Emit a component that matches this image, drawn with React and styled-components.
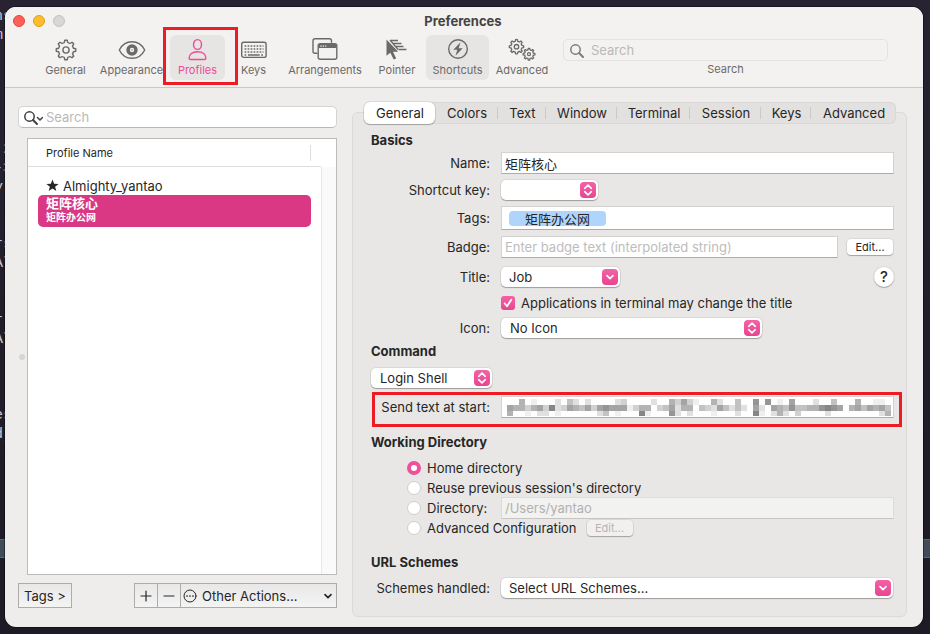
import React from "react";
import styled, { createGlobalStyle, css } from "styled-components";

const font = `Inter, "Noto Sans CJK SC", sans-serif`;

const GlobalStyle = createGlobalStyle`
  *, *::before, *::after { box-sizing: border-box; }
  body { margin: 0; background: #231f2d; font: 13px/16px ${font}; color: #262626; }
  button, input, select { font: inherit; color: inherit; margin: 0; }
`;

const Desktop = styled.div`
  position: relative;
  display: flex;
  min-height: 100vh;
  padding: 7px 7px 7px 5px;
  overflow: hidden;
  background: linear-gradient(#282333, #211e2a 50%, #1e1b27);
`;

const Terminal = styled.div`
  position: absolute;
  inset: 7px 0 0 0;
  color: #c9c5d2;
  font: 15px/19px "Liberation Mono", monospace;
  text-indent: -6px;
  white-space: pre;
`;
const TerminalLine = styled.div`
  height: 19px;
`;
const TerminalBar = styled.div`
  height: 19px;
  margin-top: 95px;
  background: #404b59;
  border-top: 1px solid #59687a;
  border-bottom: 1px solid #59687a;
`;

const Window = styled.main`
  position: relative;
  flex: 1;
  display: flex;
  flex-direction: column;
  border-radius: 11px;
  background: #eeedeb;
  box-shadow: 0 0 0 1px rgba(0, 0, 0, 0.4);
`;

const Header = styled.header`
  height: 81px;
  border-bottom: 1px solid #c9c8c7;
  border-radius: 11px 11px 0 0;
  background: #f3f2f0;
`;
const TitleBar = styled.div`
  display: grid;
  grid-template-columns: 1fr auto 1fr;
  align-items: center;
  height: 28px;
  padding: 0 10px 0 8px;
`;
const Lights = styled.div`
  display: flex;
  gap: 8px;
`;
const Light = styled.button`
  width: 12px;
  height: 12px;
  padding: 0;
  border: 1px solid ${(p) => p.$edge};
  border-radius: 50%;
  background: ${(p) => p.$fill};
`;
const WindowTitle = styled.h1`
  margin: 0;
  font-size: 13px;
  font-weight: 700;
  color: #454443;
`;

const Toolbar = styled.nav`
  display: flex;
  gap: 1px;
  padding: 0 35px 0 33px;
`;
const ToolButton = styled.button`
  position: relative;
  flex: none;
  display: flex;
  flex-direction: column;
  align-items: center;
  width: ${(p) => p.$width}px;
  height: 45px;
  padding: 2px 0 0;
  border: 0;
  border-radius: 6px;
  background: ${(p) => (p.$shaded ? "#e6e5e3" : "transparent")};
  color: ${(p) => (p.$accent ? "#ee4a97" : "#6b6a68")};
  font-size: 11px;
  line-height: 14px;
  svg { display: block; }
`;
const highlight = css`
  content: "";
  position: absolute;
  z-index: 2;
  border: 3px solid #ed1c24;
  pointer-events: none;
`;
const HighlightedTool = styled(ToolButton)`
  &::after { ${highlight} inset: -8px -13px -5px -7px; }
`;
const ToolSearch = styled.label`
  flex: 1;
  display: flex;
  flex-direction: column;
  align-items: center;
  gap: 1px;
  min-width: 0;
  margin: 4px 0 0 8px;
  font-size: 11px;
  line-height: 14px;
  color: #6b6a68;
`;

const SearchBox = styled.div`
  display: flex;
  align-items: center;
  gap: ${(p) => (p.$plain ? 6 : 3)}px;
  width: 100%;
  height: 22px;
  padding: 0 5px 0 ${(p) => (p.$plain ? 6 : 5)}px;
  border: 1px solid ${(p) => (p.$plain ? "#e3e2e0" : "#d4d3d2")};
  border-bottom-color: ${(p) => (p.$plain ? "#e3e2e0" : "#b9b8b7")};
  border-radius: 5px;
  background: ${(p) => (p.$plain ? "transparent" : "#fff")};
  color: ${(p) => (p.$plain ? "#7c7b79" : "#3f3f3f")};
  font-size: 13px;
  svg { flex: none; }
`;
const BareInput = styled.input`
  flex: 1;
  min-width: 0;
  height: 20px;
  padding: 0;
  border: 0;
  outline: 0;
  background: transparent;
  &::placeholder { color: #b9b9b8; opacity: 1; }
`;

const Content = styled.div`
  flex: 1;
  display: grid;
  grid-template-columns: 319fr 555fr;
  gap: 15px;
  padding: 14px 16px 10px 13px;
`;

const Sidebar = styled.section`
  display: flex;
  flex-direction: column;
  padding: 4px 0 9px;
`;
const ListArea = styled.div`
  flex: 1;
  display: flex;
  align-items: stretch;
  margin: 10px 0 8px;
`;
const Handle = styled.div`
  align-self: center;
  flex: none;
  width: 6px;
  height: 6px;
  margin: 0 2px 0 1px;
  border-radius: 50%;
  background: #d6d5d3;
`;
const ListBox = styled.div`
  flex: 1;
  display: grid;
  grid-template: 28px 1fr / 1fr 15px;
  border: 1px solid #bcbbba;
  background: #fff;
`;
const ProfileTable = styled.table`
  grid-row: 1 / 3;
  align-self: start;
  width: 100%;
  border-spacing: 0;
  th {
    height: 28px;
    padding: 0 10px 0 18px;
    border-bottom: 1px solid #dededd;
    text-align: left;
    font-size: 11px;
    font-weight: 400;
  }
  td { padding: 0 10px; }
  tbody::before { content: ""; display: block; height: 9px; }
`;
const ColumnTitle = styled.div`
  border-right: 1px solid #dededd;
`;
const Track = styled.div`
  grid-column: 2;
  grid-row: 2;
  border-left: 1px solid #e7e7e7;
  background: #fafafa;
`;
const ProfileRow = styled.div`
  padding: 0 8px;
  height: ${(p) => (p.$selected ? 32 : 19)}px;
  border-radius: 5px;
  background: ${(p) => (p.$selected ? "#da3884" : "transparent")};
  color: ${(p) => (p.$selected ? "#fff" : "inherit")};
  font-weight: ${(p) => (p.$selected ? 700 : 400)};
  display: ${(p) => (p.$selected ? "block" : "flex")};
  align-items: center;
  gap: 4px;
`;
const ProfileTags = styled.div`
  font-size: 10px;
  line-height: 13px;
`;

const Footer = styled.div`
  display: flex;
  justify-content: space-between;
`;
const SquareButton = styled.button`
  display: flex;
  align-items: center;
  justify-content: center;
  min-width: 24px;
  height: 25px;
  padding: 0 ${(p) => (p.$text ? 5 : 0)}px;
  border: 1px solid #adacab;
  background: linear-gradient(#e9e8e8, #f4f4f3);
  & + &, & + div { margin-left: -1px; }
`;
const Group = styled.div`
  display: flex;
`;
const ActionsMenu = styled.div`
  display: grid;
  grid-template: 23px / 24px 1fr 17px;
  align-items: center;
  width: 157px;
  height: 25px;
  border: 1px solid #adacab;
  background: linear-gradient(#e9e8e8, #f4f4f3);
  svg { grid-row: 1; justify-self: center; pointer-events: none; }
  svg:first-child { grid-column: 1; margin-right: 6px; }
  svg:last-child { grid-column: 3; }
  select {
    grid-area: 1 / 1 / 2 / 4;
    appearance: none;
    height: 23px;
    padding: 0 17px 0 21px;
    border: 0;
    outline: 0;
    background: transparent;
  }
`;

const PanelColumn = styled.section`
  display: flex;
  flex-direction: column;
  isolation: isolate;
`;
const Tabs = styled.div`
  z-index: 1;
  display: grid;
  grid-template-columns: 71fr 63fr 48fr 71fr 73fr 71fr 50fr 85fr;
  height: 22px;
  margin: 0 11px -12px 12px;
  border-radius: 6px;
  background: #e2e1df;
  box-shadow: inset 0 0 0 1px #d9d8d6;
`;
const Tab = styled.button`
  display: flex;
  align-items: center;
  justify-content: center;
  height: 22px;
  padding: 0;
  border: 0;
  border-radius: 6px;
  background: ${(p) => (p.$active ? "#fff" : "transparent")};
  box-shadow: ${(p) => (p.$active ? "0 0 0 1px rgba(0,0,0,.08), 0 1px 1px rgba(0,0,0,.25)" : "none")};
  &::before {
    content: "";
    width: 2px;
    margin-right: auto;
  }
  &::after {
    content: "";
    width: 1px;
    height: 12px;
    margin-left: auto;
    background: ${(p) => (p.$divider ? "#cbcac8" : "transparent")};
  }
`;
const Panel = styled.form`
  flex: 1;
  padding: 15px 12px 17px 18px;
  border: 1px solid #dbdad8;
  border-radius: 6px;
  background: #e8e7e5;
`;
const Heading = styled.h2`
  margin: 0;
  font-size: 13px;
  font-weight: 700;
  line-height: 24px;
`;
const Row = styled.div`
  position: relative;
  display: grid;
  grid-template-columns: 119px minmax(0, 1fr);
  column-gap: 11px;
  align-items: center;
  min-height: 22px;
  margin-bottom: ${(p) => p.$gap ?? 5}px;
  > label:first-child { text-align: right; }
`;
const HighlightedRow = styled(Row)`
  &::after { ${highlight} inset: -4px -8px -9px 1px; }
`;
const Inline = styled.div`
  display: flex;
  align-items: center;
  gap: ${(p) => p.$gap ?? 9}px;
`;
const Spacer = styled.span`
  flex: 1;
`;
const fieldBox = css`
  width: 100%;
  min-width: 0;
  border: 1px solid #d3d2d1;
  border-bottom-color: #adacab;
  background: #fff;
`;
const TextInput = styled.input`
  ${fieldBox}
  height: 22px;
  padding: 0 3px;
  outline: 0;
  font-family: ${(p) => (p.$cjk ? `"Noto Sans CJK SC", sans-serif` : "inherit")};
  &::placeholder { color: #bdbdbc; opacity: 1; }
  &:disabled {
    border-color: #dddcdb #dddcdb #c6c5c4;
    background: #f2f2f1;
    color: #b2b1b0;
  }
`;
const TagField = styled.div`
  ${fieldBox}
  display: flex;
  align-items: center;
  height: 24px;
  padding: 0 7px;
`;
const Token = styled.span`
  padding: 0 16px;
  border-radius: 4px;
  background: #b0d5fd;
  font-family: "Noto Sans CJK SC", sans-serif;
  line-height: 15px;
`;
const Redacted = styled.div`
  display: grid;
  align-items: center;
  > * { grid-area: 1 / 1; }
  svg { width: 100%; height: 17px; padding: 0 3px 0 6px; pointer-events: none; }
`;

const SelectBox = styled.div`
  display: grid;
  align-items: center;
  width: ${(p) => (p.$width ? `${p.$width}px` : "calc(100% - 1px)")};
  height: 20px;
  border-radius: 5px;
  background: #fff;
  box-shadow: 0 0 0 1px rgba(0, 0, 0, 0.06), 0 1px 1px rgba(0, 0, 0, 0.28);
  > * { grid-area: 1 / 1; }
  select {
    appearance: none;
    width: 100%;
    height: 20px;
    padding: 0 24px 0 ${(p) => (p.$single ? 8 : 9)}px;
    border: 0;
    outline: 0;
    background: transparent;
  }
`;
const Knob = styled.span`
  justify-self: end;
  display: flex;
  align-items: center;
  justify-content: center;
  width: 16px;
  height: 16px;
  margin-right: 2px;
  border-radius: 4px;
  background: linear-gradient(#f263a5, #e9458f);
  color: #fff;
  pointer-events: none;
`;
const PushButton = styled.button`
  flex: none;
  width: 46px;
  height: 16px;
  margin-right: 1px;
  padding: 0;
  border: 0;
  border-radius: 4px;
  background: #fff;
  box-shadow: 0 0 0 1px rgba(0, 0, 0, 0.06), 0 1px 1px rgba(0, 0, 0, 0.25);
  font-size: 11px;
  line-height: 16px;
  &:disabled { margin-left: 4px; background: #f1f0ef; color: #b5b4b3; }
`;
const HelpButton = styled.button`
  width: 20px;
  height: 20px;
  padding: 0;
  border: 0;
  border-radius: 50%;
  background: #fff;
  box-shadow: 0 0 0 1px rgba(0, 0, 0, 0.06), 0 1px 1px rgba(0, 0, 0, 0.25);
  font-size: 15px;
  font-weight: 500;
  line-height: 20px;
`;
const Check = styled.span`
  display: grid;
  width: 14px;
  height: 14px;
  > * { grid-area: 1 / 1; }
  input {
    appearance: none;
    width: 14px;
    height: 14px;
    border-radius: 3px;
    background: linear-gradient(#f263a5, #e9458f);
  }
  svg { pointer-events: none; }
`;
const Radio = styled.input`
  appearance: none;
  flex: none;
  width: 14px;
  height: 14px;
  border: 1px solid #cfcecd;
  border-radius: 50%;
  background: #fff;
  &:checked { border: 4px solid #ee5099; }
`;
const RadioRow = styled.div`
  display: flex;
  align-items: center;
  gap: 6px;
  height: 20px;
  padding-left: 36px;
`;
const DirectoryLabel = styled.label`
  flex: none;
  width: 68px;
`;
const Section = styled.div`
  padding-top: ${(p) => p.$top}px;
`;

function gearPath(cx, cy, outer, inner, teeth) {
  const step = (Math.PI * 2) / teeth;
  const at = (r, a) => `${(cx + r * Math.sin(a)).toFixed(2)} ${(cy - r * Math.cos(a)).toFixed(2)}`;
  let d = "";
  for (let i = 0; i < teeth; i++) {
    const a = i * step;
    d += `${i ? "L" : "M"}${at(inner, a - step * 0.3)}L${at(outer, a - step * 0.16)}`;
    d += `A${outer} ${outer} 0 0 1 ${at(outer, a + step * 0.16)}L${at(inner, a + step * 0.3)}`;
    d += `A${inner} ${inner} 0 0 1 ${at(inner, a + step * 0.7)}`;
  }
  return `${d}Z`;
}

const Icon = ({ w = 28, h = 26, children, sw = 1.4 }) => (
  <svg width={w} height={h} viewBox={`0 0 ${w} ${h}`} fill="none" stroke="currentColor" strokeWidth={sw} strokeLinecap="round" strokeLinejoin="round" aria-hidden="true">
    {children}
  </svg>
);

const GearIcon = () => (
  <Icon>
    <path d={gearPath(14, 13, 9.8, 7.6, 8)} />
    <circle cx="14" cy="13" r="3.1" />
  </Icon>
);
const EyeIcon = () => (
  <Icon>
    <path d="M1.3 13C4 7.5 8.7 4.7 14 4.7S24 7.5 26.7 13C24 18.5 19.3 21.3 14 21.3S4 18.5 1.3 13Z" />
    <path fill="currentColor" stroke="none" fillRule="evenodd" d="M14 7.3a5.7 5.7 0 1 1 0 11.4a5.7 5.7 0 0 1 0-11.4ZM14 10.8a2.2 2.2 0 1 0 0 4.4a2.2 2.2 0 0 0 0-4.4Z" />
    <circle cx="14" cy="13" r="0.7" fill="currentColor" stroke="none" />
  </Icon>
);
const PersonIcon = () => (
  <Icon>
    <ellipse cx="13.5" cy="7.5" rx="4" ry="4.9" />
    <path d="M5.1 21.2C5.1 17.5 8.3 14.7 13.5 14.7S21.9 17.5 21.9 21.2Q21.9 22.5 20.5 22.5H6.5Q5.1 22.5 5.1 21.2Z" />
  </Icon>
);
const KeyboardIcon = () => (
  <Icon>
    <rect x="1.7" y="5.2" width="24.4" height="15.2" rx="2" />
    <path strokeWidth="1.7" strokeLinecap="butt" strokeDasharray="1.7 1.3" d="M4.6 9H23.5M4.6 12H23.5M4.6 15H23.5" />
    <path strokeLinecap="butt" strokeWidth="1.7" d="M4.6 18H6.3M8 18H19.7M21.2 18H23" />
  </Icon>
);
const WindowsIcon = () => (
  <Icon>
    <path d="M6 16.3H4Q2 16.3 2 14.3V3.7Q2 1.7 4 1.7H18.5Q20.500 1.7 20.5 3.7V5.3" />
    <rect x="7.2" y="6.6" width="18.6" height="15.7" rx="2" />
    <path d="M7.5 9Q7.5 6.8 9.5 6.8H23.5Q25.5 6.8 25.5 9V11H7.5Z" fill="currentColor" stroke="none" />
    <path stroke="#f3f2f0" strokeWidth="1.3" strokeLinecap="butt" strokeDasharray="1.3 1.1" d="M9.3 9.2H15.3" />
  </Icon>
);
const PointerIcon = () => (
  <Icon sw={1.3}>
    <path strokeLinecap="butt" d="M7 3.500H15M9.5 6.5H18.5M12 9.5H20.5M15.5 12.5H23.5M7 3L15 12.5" />
    <path d="M3.5 2.5V18.8L7.3 15.7L10.7 22.6L13.2 21.4L10 14.8H15.2Z" fill="currentColor" stroke="none" />
  </Icon>
);
const BoltIcon = () => (
  <Icon>
    <circle cx="14" cy="12" r="9.3" />
    <path d="M16.5 5.2L9.3 12.7H13.3L11.5 18.8L18.7 11.3H14.7Z" fill="currentColor" stroke="none" />
  </Icon>
);
const GearsIcon = () => (
  <Icon sw={1.3}>
    <path d={gearPath(8.5, 9.7, 7.2, 5.5, 8)} />
    <circle cx="8.5" cy="9.7" r="2.2" />
    <path d={gearPath(21, 17.2, 5.9, 4.4, 8)} />
    <circle cx="21" cy="17.2" r="1.5" />
  </Icon>
);
const MagnifierIcon = ({ menu }) => (
  <Icon w={menu ? 19 : 15} h={15} sw={1.5}>
    <circle cx="5.5" cy="6.5" r="4.7" />
    <path d="M9 10L13 14" strokeWidth="1.9" />
    {menu && <path d="M13.5 7.5L16 10L18.5 7.5" />}
  </Icon>
);
const UpDown = () => (
  <Icon w={10} h={12} sw={1.6}>
    <path d="M1.7 4.3L5 1.2L8.3 4.3M1.7 7.7L5 10.8L8.3 7.7" />
  </Icon>
);
const Down = () => (
  <Icon w={10} h={8} sw={1.7}>
    <path d="M2 2.7L5 5.6L8 2.7" />
  </Icon>
);

const tools = [
  ["General", GearIcon, 55],
  ["Appearance", EyeIcon, 75],
  ["Profiles", PersonIcon, 55],
  ["Keys", KeyboardIcon, 55],
  ["Arrangements", WindowsIcon, 86],
  ["Pointer", PointerIcon, 56],
  ["Shortcuts", BoltIcon, 63],
  ["Advanced", GearsIcon, 64],
];
const tabs = ["General", "Colors", "Text", "Window", "Terminal", "Session", "Keys", "Advanced"];

const terminalLines = [
  "ns", "mr", "", "", "", " (", " :", " 2", "->", "y", "", "", "rs", "A\\", "", "", "r'", "A\\", "", "", "", "es", "d]",
];

const mosaic = [
  "0050100020420200002300002005363100520040070701060002004000500110",
  "6553563823654636766613550346255043264242062065474455787605646564",
  "5001022010000002401000810007202000100020081025203000020000000025",
];

function Mosaic() {
  return (
    <svg viewBox="0 0 384 17" preserveAspectRatio="none" aria-hidden="true" shapeRendering="crispEdges">
      {mosaic.map((line, y) =>
        [...line].map((level, x) => {
          const v = 254 - Number(level) * 15;
          return <rect key={`${x}-${y}`} x={x * 6} y={y * 6} width="6" height={y === 2 ? 5 : 6} fill={`rgb(${v},${v},${v})`} />;
        })
      )}
    </svg>
  );
}

function Select({ id, width, option, label, single }) {
  return (
    <SelectBox $width={width} $single={single}>
      <select id={id} aria-label={label}>
        <option>{option}</option>
      </select>
      <Knob>{single ? <Down /> : <UpDown />}</Knob>
    </SelectBox>
  );
}

export default function App() {
  return (
    <>
      <GlobalStyle />
      <Desktop>
        <Terminal aria-hidden="true">
          {terminalLines.map((line, i) => (
            <TerminalLine key={i}>{line}</TerminalLine>
          ))}
          <TerminalBar />
        </Terminal>
        <Window>
          <Header>
            <TitleBar>
              <Lights>
                <Light aria-label="Close" $fill="#ff5f57" $edge="#e2463f" />
                <Light aria-label="Minimize" $fill="#febc2e" $edge="#e1a116" />
                <Light aria-label="Zoom" $fill="#d8d7d5" $edge="#c3c2c0" />
              </Lights>
              <WindowTitle>Preferences</WindowTitle>
            </TitleBar>
            <Toolbar>
              {tools.map(([name, Glyph, width]) => {
                const Item = name === "Profiles" ? HighlightedTool : ToolButton;
                return (
                  <Item key={name} $width={width} $accent={name === "Profiles"} $shaded={name === "Profiles" || name === "Shortcuts"}>
                    <Glyph />
                    {name}
                  </Item>
                );
              })}
              <ToolSearch>
                <SearchBox $plain>
                  <MagnifierIcon />
                  <BareInput placeholder="Search" />
                </SearchBox>
                Search
              </ToolSearch>
            </Toolbar>
          </Header>

          <Content>
            <Sidebar>
              <SearchBox>
                <MagnifierIcon menu />
                <BareInput placeholder="Search" aria-label="Search profiles" />
              </SearchBox>
              <ListArea>
                <Handle />
                <ListBox>
                  <ProfileTable>
                    <thead>
                      <tr>
                        <th scope="col">
                          <ColumnTitle>Profile Name</ColumnTitle>
                        </th>
                      </tr>
                    </thead>
                    <tbody>
                      <tr>
                        <td>
                          <ProfileRow>
                            <svg width="13" height="13" viewBox="0 0 13 13" fill="#262626" aria-hidden="true">
                              <path d="M6.5 0.5L8.1 4.7L12.6 4.9L9.1 7.7L10.3 12L6.5 9.6L2.7 12L3.9 7.7L0.4 4.9L4.9 4.7Z" />
                            </svg>
                            Almighty_yantao
                          </ProfileRow>
                        </td>
                      </tr>
                      <tr>
                        <td>
                          <ProfileRow $selected>
                            矩阵核心
                            <ProfileTags>矩阵办公网</ProfileTags>
                          </ProfileRow>
                        </td>
                      </tr>
                    </tbody>
                  </ProfileTable>
                  <Track />
                </ListBox>
              </ListArea>
              <Footer>
                <SquareButton $text>Tags &gt;</SquareButton>
                <Group>
                  <SquareButton aria-label="Add profile">
                    <Icon w={12} h={12} sw={1.2}><path d="M1 6H11M6 1V11" /></Icon>
                  </SquareButton>
                  <SquareButton aria-label="Remove profile">
                    <Icon w={12} h={12} sw={1.2}><path d="M1 6H11" /></Icon>
                  </SquareButton>
                  <ActionsMenu>
                    <Icon w={14} h={14} sw={1}>
                      <circle cx="7" cy="7" r="6" />
                      <path strokeWidth="1.7" d="M4 7H4.01M7 7H7.01M10 7H10.01" />
                    </Icon>
                    <select aria-label="Other actions">
                      <option>Other Actions...</option>
                    </select>
                    <Down />
                  </ActionsMenu>
                </Group>
              </Footer>
            </Sidebar>

            <PanelColumn>
              <Tabs>
                {tabs.map((name, i) => (
                  <Tab key={name} $active={i === 0} $divider={i > 0 && i < tabs.length - 1}>
                    {name}
                  </Tab>
                ))}
              </Tabs>
              <Panel onSubmit={(e) => e.preventDefault()}>
                <Heading>Basics</Heading>
                <Row>
                  <label htmlFor="name">Name:</label>
                  <TextInput id="name" defaultValue="矩阵核心" $cjk />
                </Row>
                <Row>
                  <label htmlFor="shortcut">Shortcut key:</label>
                  <Select id="shortcut" width={97} option="" />
                </Row>
                <Row $gap={6}>
                  <label htmlFor="tags">Tags:</label>
                  <TagField>
                    <Token>矩阵办公网</Token>
                    <BareInput id="tags" />
                  </TagField>
                </Row>
                <Row $gap={8}>
                  <label htmlFor="badge">Badge:</label>
                  <Inline>
                    <TextInput id="badge" placeholder="Enter badge text (interpolated string)" />
                    <PushButton type="button">Edit...</PushButton>
                  </Inline>
                </Row>
                <Row $gap={4}>
                  <label htmlFor="title">Title:</label>
                  <Inline>
                    <Select id="title" width={119} option="Job" single />
                    <Spacer />
                    <HelpButton type="button">?</HelpButton>
                  </Inline>
                </Row>
                <Row $gap={3}>
                  <span />
                  <Inline $gap={6}>
                    <Check>
                      <input id="retitle" type="checkbox" defaultChecked />
                      <svg width="14" height="14" viewBox="0 0 14 14" fill="none" stroke="#fff" strokeWidth="1.8" strokeLinecap="round" strokeLinejoin="round" aria-hidden="true">
                        <path d="M3.7 7.5L6 10.3L10.3 3.7" />
                      </svg>
                    </Check>
                    <label htmlFor="retitle">Applications in terminal may change the title</label>
                  </Inline>
                </Row>
                <Row $gap={0}>
                  <label htmlFor="icon">Icon:</label>
                  <Select id="icon" width={261} option="No Icon" />
                </Row>

                <Heading>Command</Heading>
                <Section $top={5}>
                  <Select label="Command" width={121} option="Login Shell" />
                </Section>
                <Section $top={8}>
                  <HighlightedRow $gap={0}>
                    <label htmlFor="send">Send text at start:</label>
                    <Redacted>
                      <TextInput id="send" />
                      <Mosaic />
                    </Redacted>
                  </HighlightedRow>
                </Section>

                <Section $top={12}>
                  <Heading>Working Directory</Heading>
                </Section>
                <Section $top={4}>
                  <RadioRow>
                    <Radio type="radio" name="dir" id="home" defaultChecked />
                    <label htmlFor="home">Home directory</label>
                  </RadioRow>
                  <RadioRow>
                    <Radio type="radio" name="dir" id="reuse" />
                    <label htmlFor="reuse">Reuse previous session's directory</label>
                  </RadioRow>
                  <RadioRow>
                    <Radio type="radio" name="dir" id="custom" />
                    <DirectoryLabel htmlFor="custom">Directory:</DirectoryLabel>
                    <TextInput aria-label="Directory path" defaultValue="/Users/yantao" disabled />
                  </RadioRow>
                  <RadioRow>
                    <Radio type="radio" name="dir" id="advanced" />
                    <label htmlFor="advanced">Advanced Configuration</label>
                    <PushButton type="button" disabled>Edit...</PushButton>
                  </RadioRow>
                </Section>

                <Section $top={12}>
                  <Heading>URL Schemes</Heading>
                </Section>
                <Section $top={3}>
                  <Row $gap={0}>
                    <label htmlFor="schemes">Schemes handled:</label>
                    <Select id="schemes" option="Select URL Schemes..." single />
                  </Row>
                </Section>
              </Panel>
            </PanelColumn>
          </Content>
        </Window>
      </Desktop>
    </>
  );
}
